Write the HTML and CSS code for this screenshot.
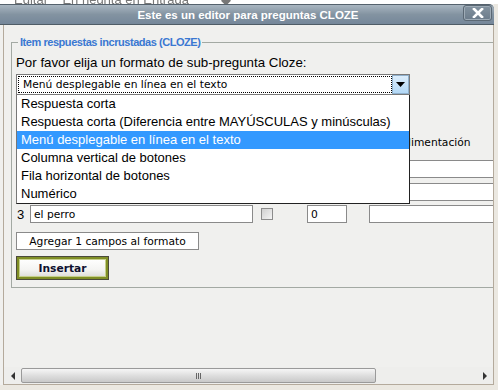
FILE: index.html
```html
<!DOCTYPE html>
<html>
<head>
    <title>Editor CLOZE</title>
    <link rel="stylesheet" href="styles.css">
</head>
<body>
    <div class="peek">Editar &nbsp;&nbsp; En negrita en Entrada &nbsp;&nbsp;&nbsp;&nbsp;&nbsp;&nbsp;&nbsp; ◆</div>
    <div class="dialog">
        <div class="titlebar">
            <span class="title">Este es un editor para preguntas CLOZE</span>
            <span class="close">
                <svg width="12" height="10" viewBox="0 0 12 10">
                    <path d="M2 1 L10 9 M10 1 L2 9" stroke="#fff" stroke-width="2.6" stroke-linecap="square"/>
                </svg>
            </span>
        </div>
        <div class="body">
            <fieldset class="cloze">
                <legend>Item respuestas incrustadas (CLOZE)</legend>
                <label class="prompt">Por favor elija un formato de sub-pregunta Cloze:</label>
                <div class="select-wrap">
                    <div class="select">
                        <span class="select-value">Menú desplegable en línea en el texto</span>
                        <span class="select-btn">
                            <svg width="9" height="5" viewBox="0 0 9 5"><path d="M0 0 H9 L4.5 5 Z" fill="#000"/></svg>
                        </span>
                    </div>
                    <ul class="options">
                        <li>Respuesta corta</li>
                        <li>Respuesta corta (Diferencia entre MAYÚSCULAS y minúsculas)</li>
                        <li class="selected">Menú desplegable en línea en el texto</li>
                        <li>Columna vertical de botones</li>
                        <li>Fila horizontal de botones</li>
                        <li>Numérico</li>
                    </ul>
                </div>

                <div class="answers">
                    <div class="row head">
                        <span></span>
                        <span></span>
                        <span></span>
                        <span></span>
                        <span>Retroalimentación</span>
                    </div>
                    <div class="row first">
                        <span class="num"></span>
                        <input type="text" class="answer" value="">
                        <span class="check"><span class="box"></span></span>
                        <input type="text" class="grade" value="">
                        <input type="text" class="feedback" value="">
                    </div>
                    <div class="row second">
                        <span class="num"></span>
                        <input type="text" class="answer" value="">
                        <span class="check"><span class="box"></span></span>
                        <input type="text" class="grade" value="">
                        <input type="text" class="feedback" value="">
                    </div>
                    <div class="row third">
                        <span class="num">3</span>
                        <input type="text" class="answer" value="el perro">
                        <span class="check"><span class="box"></span></span>
                        <input type="text" class="grade" value="0">
                        <input type="text" class="feedback" value="">
                    </div>
                </div>

                <button type="button" class="add">Agregar 1 campos al formato</button>
                <button type="button" class="insert">Insertar</button>
            </fieldset>
        </div>
        <div class="hscroll">
            <span class="arrow left"></span>
            <span class="track">
                <span class="thumb"><span class="grip"></span></span>
            </span>
            <span class="arrow right"></span>
        </div>
    </div>
</body>
</html>
```

FILE: styles.css
```css
body {
    margin: 0;
    background-color: #ebe8e1;
    font-family: "Liberation Sans", Arial, sans-serif;
    overflow: hidden;
}

.peek {
    height: 4px;
    overflow: hidden;
    background-color: #fff;
    font-size: 13px;
    line-height: 0;
    color: #777;
    padding-left: 14px;
    white-space: nowrap;
    filter: blur(0.6px);
}

.dialog {
    width: 494px;
    height: 381px;
    display: flex;
    flex-direction: column;
    background-color: #f0f0ee;
}

.titlebar {
    height: 19px;
    position: relative;
    display: flex;
    align-items: center;
    justify-content: center;
    border-top: 1px solid #55626d;
    border-bottom: 1px solid #4f5c66;
    border-top-right-radius: 5px;
    background: linear-gradient(#a9b6c1, #8393a1 50%, #75879a);
}

.title {
    color: #fff;
    font-weight: bold;
    font-size: 11.5px;
    margin-left: 2px;
}

.close {
    position: absolute;
    right: 2px;
    top: 0;
    width: 27px;
    height: 14px;
    border: 1px solid #5b6874;
    border-radius: 3px;
    background: linear-gradient(#8493a0, #6b7b8a);
    box-shadow: inset 0 0 0 1px #9eabb6;
    display: flex;
    align-items: center;
    justify-content: center;
}

.body {
    flex: 1;
    overflow: hidden;
    margin-left: 3px;
    border-left: 1px solid #b4aa9c;
    border-right: 1px solid #b4aa9c;
    background-color: #f0f0ee;
    padding: 11px 0 0 7px;
}

.cloze {
    width: 520px;
    margin: 0;
    padding: 0 0 8px 4px;
    border: 1px solid #a3a9a3;
    border-right: none;
    font-size: 13px;
    color: #000;
}

.cloze legend {
    padding: 0 2px;
    margin-left: 2px;
    font-size: 11px;
    letter-spacing: -0.45px;
    font-weight: bold;
    color: #3a78d2;
}

.prompt {
    display: block;
    margin-top: 7px;
    line-height: 16px;
    font-size: 13.3px;
}

.select-wrap {
    position: relative;
    margin-top: 3px;
    width: 394px;
}

.select {
    height: 19px;
    border: 1px solid #7a7a7a;
    background-color: #fff;
    display: flex;
    padding: 0;
}

.select-value {
    flex: 1;
    margin: 1px 0 1px 1px;
    border: 1px dotted #000;
    padding-left: 4px;
    font-family: "DejaVu Sans", Verdana, sans-serif;
    font-size: 10.7px;
    line-height: 15px;
}

.select-btn {
    width: 15px;
    border: 1px solid #8fb0cc;
    background: linear-gradient(#dcedfb, #b2d8f6);
    display: flex;
    align-items: center;
    justify-content: center;
}

.options {
    position: absolute;
    top: 21px;
    left: 0;
    right: 0;
    z-index: 2;
    margin: 0;
    padding: 0;
    list-style: none;
    background-color: #fff;
    border: 1px solid #222;
    border-top: none;
    border-left-color: #777;
}

.options li {
    height: 18px;
    line-height: 18px;
    padding-left: 4px;
    white-space: nowrap;
}

.options li.selected {
    background-color: #3399ff;
    color: #fff;
}

.answers {
    margin-top: 38px;
    display: flex;
    flex-direction: column;
}

.row {
    display: grid;
    grid-template-columns: 14px 223px 54px 40px 136px;
    align-items: center;
}

.row.head {
    height: 18px;
    font-family: "DejaVu Sans", Verdana, sans-serif;
    font-size: 10.7px;
    grid-template-columns: 14px 230px 53px 60px 136px;
}

.row.first {
    margin-top: 9px;
}

.row.second {
    margin-top: 5px;
}

.row.third {
    margin-top: 4px;
}

.row .num {
    padding-left: 1px;
}

.row input {
    height: 18px;
    box-sizing: border-box;
    border: 1px solid #8a8a8a;
    background-color: #fff;
    padding: 0 3px;
    font-family: "DejaVu Sans", Verdana, sans-serif;
    font-size: 10.7px;
    color: #000;
}

.row .check {
    padding-left: 8px;
}

.row .box {
    display: block;
    width: 10px;
    height: 10px;
    border: 1px solid #8c8c8c;
    background: linear-gradient(135deg, #d0d0d0, #f4f4f4);
}

.row .feedback {
    margin-left: 22px;
    width: 136px;
}

.add {
    display: block;
    margin-top: 9px;
    width: 183px;
    height: 18px;
    padding: 0;
    border: 1px solid #8a8a8a;
    background-color: #fff;
    font-family: "DejaVu Sans", Verdana, sans-serif;
    font-size: 10.7px;
    color: #000;
}

.insert {
    display: block;
    margin: 7px 0 0 1px;
    width: 91px;
    height: 22px;
    padding: 0;
    border: 2px solid #7f8e25;
    box-shadow: 0 0 0 1px #4a4a3a, inset 0 0 0 1px #c6cf8a;
    background: linear-gradient(#ffffff, #f4f4f2 60%, #dcdcd8);
    font-family: "DejaVu Sans", Verdana, sans-serif;
    font-size: 10.7px;
    font-weight: bold;
    color: #0e1030;
}

.hscroll {
    height: 17px;
    margin-left: 3px;
    border: 1px solid #b4aa9c;
    border-top: none;
    background-color: #eeeeec;
    display: flex;
    align-items: center;
    padding: 0 6px 0 7px;
}

.arrow {
    width: 0;
    height: 0;
    border-top: 4px solid transparent;
    border-bottom: 4px solid transparent;
}

.arrow.left {
    border-right: 4px solid #333;
}

.arrow.right {
    border-left: 4px solid #333;
}

.track {
    flex: 1;
    height: 15px;
    margin: 0 6px 0 6px;
}

.thumb {
    display: flex;
    align-items: center;
    justify-content: center;
    width: 353px;
    height: 13px;
    border: 1px solid #9a9a9a;
    border-radius: 2px;
    background: linear-gradient(#f6f6f6, #dcdcdc 55%, #c9c9c9);
}

.grip {
    width: 6px;
    height: 6px;
    background: repeating-linear-gradient(90deg, #666 0 1px, transparent 1px 2px);
}
```
